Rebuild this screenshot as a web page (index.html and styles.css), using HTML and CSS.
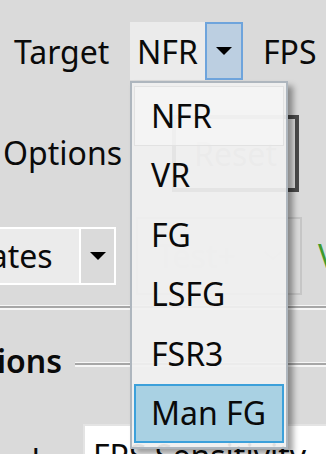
FILE: index.html
```html
<!DOCTYPE html>
<html lang="en">
<head>
    <meta charset="UTF-8">
    <meta name="viewport" content="width=device-width, initial-scale=1.0">
    <title>Frame Generation Settings</title>
    <link rel="stylesheet" href="styles.css">
</head>
<body>

    <div class="window">
        <div class="row row-target">
            <span class="label target-label">Target</span>
            <div class="combo combo-active">
                <span class="combo-text">NFR</span>
                <span class="combo-btn"><span class="arrow"></span></span>
            </div>
            <span class="label fps-label">FPS</span>
        </div>

        <div class="row row-options">
            <div class="cut cut-options"><span class="label">Options</span></div>
            <button class="btn" type="button">Reset</button>
        </div>

        <div class="row row-profile">
            <div class="cut cut-combo">
                <div class="combo combo-plain">
                    <span class="combo-text">Updates</span>
                    <span class="combo-btn"><span class="arrow"></span></span>
                </div>
            </div>
            <div class="combo combo-disabled">
                <span class="combo-text">Test+</span>
                <svg class="chevron" width="18" height="10" viewBox="0 0 18 10">
                    <path d="M1 1 L9 8 L17 1" fill="none" stroke="#cfcfcf" stroke-width="1.6"/>
                </svg>
            </div>
            <span class="label v-label">V</span>
        </div>

        <div class="sep"></div>

        <div class="row row-group">
            <div class="cut cut-heading"><span class="heading">Frame Gen Options</span></div>
            <div class="group-line"></div>
        </div>

        <div class="row row-method">
            <div class="cut cut-method"><span class="label">Method</span></div>
            <div class="field">FPS Sensitivity</div>
        </div>

        <ul class="dropdown">
            <li class="item item-current">NFR</li>
            <li class="item">VR</li>
            <li class="item">FG</li>
            <li class="item">LSFG</li>
            <li class="item">FSR3</li>
            <li class="item item-hover">Man FG</li>
        </ul>
    </div>

</body>
</html>
```

FILE: styles.css
```css
html, body {
    margin: 0;
    height: 100%;
    overflow: hidden;
}
body {
    background: #dadada;
    font-family: "Noto Sans", "Open Sans", sans-serif;
    font-size: 32px;
    color: #0a0a0a;
}
.window {
    position: relative;
    width: 326px;
    height: 454px;
    padding-top: 22px;
    box-sizing: border-box;
}
.row {
    display: flex;
    align-items: center;
}
.label {
    white-space: nowrap;
    line-height: 1;
}

/* crop helpers: content wider than the box spills off the left edge */
.cut {
    display: flex;
    justify-content: flex-end;
    flex-shrink: 0;
    white-space: nowrap;
}

/* row 1 */
.row-target {
    height: 58px;
}
.target-label {
    width: 116px;
    padding-left: 14px;
    padding-top: 2px;
    flex-shrink: 0;
}
.combo {
    display: flex;
    flex-shrink: 0;
    box-sizing: border-box;
}
.combo-text {
    line-height: 1;
    white-space: nowrap;
}
.combo-active {
    width: 113px;
    height: 58px;
    background: #ebebeb;
    align-items: center;
}
.combo-active .combo-text {
    flex: 1;
    padding-left: 7px;
    padding-top: 2px;
}
.combo-btn {
    display: flex;
    align-items: center;
    justify-content: center;
    box-sizing: border-box;
}
.combo-active .combo-btn {
    width: 38px;
    height: 58px;
    background: #bccfe1;
    border: 2px solid #6ea4dc;
}
.arrow {
    width: 0;
    height: 0;
    border-left: 8px solid transparent;
    border-right: 8px solid transparent;
    border-top: 8px solid #000;
}
.fps-label {
    margin-left: 20px;
    padding-top: 2px;
}

/* row 2 */
.row-options {
    margin-top: 35px;
    height: 77px;
}
.cut-options {
    width: 122px;
    padding-bottom: 2px;
}
.btn {
    margin-left: 50px;
    width: 127px;
    height: 77px;
    box-sizing: border-box;
    background: #e1e1e1;
    border: 4px solid #4a4a4a;
    font-family: inherit;
    font-size: 32px;
    color: #a8a8a8;
    padding: 0;
}

/* row 3 */
.row-profile {
    margin-top: 25px;
    height: 78px;
}
.cut-combo {
    width: 116px;
}
.combo-plain {
    width: 199px;
    height: 58px;
    border: 2px solid #fff;
    background: #ebebeb;
    align-items: center;
}
.combo-plain .combo-text {
    flex: 1;
    padding-left: 8px;
}
.combo-plain .combo-btn {
    width: 35px;
    height: 100%;
    background: #dadada;
    border-left: 2px solid #fff;
}
.combo-disabled {
    margin-left: 20px;
    width: 166px;
    height: 78px;
    border: 2px solid #c6c6c6;
    align-items: center;
    padding: 0 18px 0 19px;
    color: #cfcfcf;
}
.combo-disabled .combo-text {
    flex: 1;
}
.v-label {
    margin-left: 16px;
    color: #3f9a2c;
}

/* group separator */
.sep {
    margin-top: 10px;
    height: 2px;
    background: #a6a6a6;
    border-top: 1px solid #f6f6f6;
    border-bottom: 2px solid #f6f6f6;
}
.row-group {
    margin-top: 34px;
    height: 40px;
}
.cut-heading {
    width: 62px;
}
.heading {
    font-weight: 600;
    line-height: 1;
    padding-bottom: 6px;
}
.group-line {
    flex: 1;
    margin-left: 13px;
    height: 2px;
    background: #a6a6a6;
    border-top: 1px solid #f6f6f6;
    border-bottom: 2px solid #f6f6f6;
}

/* row 4 */
.row-method {
    margin-top: 40px;
    align-items: flex-start;
}
.cut-method {
    width: 40px;
    margin-top: 21px;
}
.field {
    margin-left: 43px;
    flex-shrink: 0;
    width: 300px;
    height: 60px;
    box-sizing: border-box;
    background: #fff;
    border: 2px solid #e4e4e4;
    padding: 14px 0 0 8px;
    white-space: nowrap;
    line-height: 1;
}

/* open list of the Target combo */
.dropdown {
    position: absolute;
    left: 130px;
    top: 81px;
    width: 158px;
    margin: 0;
    padding: 3px 2px 4px;
    list-style: none;
    box-sizing: border-box;
    background: rgba(240, 240, 240, 0.93);
    border: 2px solid #aeb6be;
    box-shadow: 5px 5px 6px rgba(0, 0, 0, 0.38);
}
.item {
    height: 59.5px;
    box-sizing: border-box;
    display: flex;
    align-items: center;
    padding-left: 16px;
    line-height: 1;
    border: 1px solid transparent;
}
.item-current {
    border-color: #e2e2e2;
    background: rgba(246, 246, 246, 0.6);
}
.item-hover {
    background: #a9d1e3;
    border: 2px solid #3ca0da;
    padding-left: 15px;
}
```
